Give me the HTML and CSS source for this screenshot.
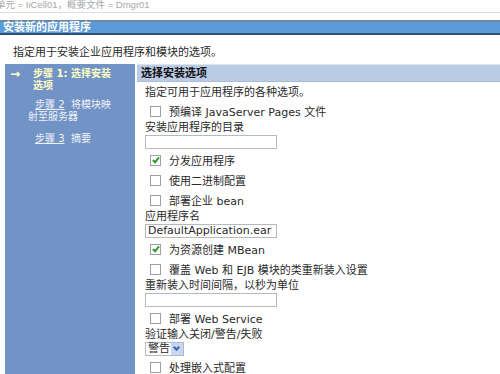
FILE: index.html
```html
<!DOCTYPE html>
<html lang="zh-CN">
<head>
<meta charset="UTF-8">
<title>安装新的应用程序</title>
<link rel="stylesheet" href="styles.css">
</head>
<body>

<div class="crumb">单元 = IiCell01，概要文件 = Dmgr01</div>

<div class="title">安装新的应用程序</div>

<div class="desc">指定用于安装企业应用程序和模块的选项。</div>

<div class="wizard">
  <div class="nav">
    <div class="step current">
      <span class="arrow">→</span>
      <span class="step-text">步骤 1: 选择安装选项</span>
    </div>
    <div class="step">
      <span class="step-text"><a href="#">步骤 2</a>&nbsp; 将模块映射至服务器</span>
    </div>
    <div class="step">
      <span class="step-text"><a href="#">步骤 3</a>&nbsp; 摘要</span>
    </div>
  </div>

  <div class="main">
    <div class="main-head">选择安装选项</div>
    <div class="main-body">
      <div class="intro">指定可用于应用程序的各种选项。</div>

      <div class="check"><span class="box"></span>预编译 JavaServer Pages 文件</div>
      <div class="label">安装应用程序的目录</div>
      <div class="input"></div>

      <div class="check"><span class="box on"></span>分发应用程序</div>
      <div class="check"><span class="box"></span>使用二进制配置</div>
      <div class="check"><span class="box"></span>部署企业 bean</div>
      <div class="label">应用程序名</div>
      <div class="input">DefaultApplication.ear</div>

      <div class="check"><span class="box on"></span>为资源创建 MBean</div>
      <div class="check"><span class="box"></span>覆盖 Web 和 EJB 模块的类重新装入设置</div>
      <div class="label">重新装入时间间隔，以秒为单位</div>
      <div class="input"></div>

      <div class="check"><span class="box"></span>部署 Web Service</div>
      <div class="label">验证输入关闭/警告/失败</div>
      <div class="select"><span class="select-val">警告</span><span class="select-btn"></span></div>

      <div class="check last"><span class="box"></span>处理嵌入式配置</div>
    </div>
  </div>
</div>

</body>
</html>
```

FILE: styles.css
```css
html, body {
  margin: 0;
  padding: 0;
  background: #fff;
  font-family: "DejaVu Sans", "Noto Sans CJK SC", sans-serif;
  font-size: 11px;
  color: #2a2a2a;
  overflow: hidden;
}
.crumb {
  height: 12px;
  line-height: 10px;
  font-family: "Liberation Sans", "Noto Sans CJK SC", sans-serif;
  font-size: 9.5px;
  color: #a8a8a8;
  text-indent: -4px;
  border-bottom: 1px solid #dcdcdc;
  white-space: nowrap;
}
.title {
  margin-top: 7px;
  height: 11px;
  line-height: 11px;
  padding-left: 3px;
  background: #5b9ad9;
  border-top: 2px solid #6f88a2;
  border-bottom: 2px solid #33506f;
  color: #fff;
  font-weight: bold;
}
.desc {
  padding: 11px 0 0 13px;
  height: 18px;
  line-height: 14px;
}
/* wizard: steps on the left, form on the right */
.wizard {
  display: flex;
  margin-left: 5px;
  height: 320px;
}
.nav {
  width: 130px;
  background: #7293c5;
  padding-top: 4px;
  box-sizing: border-box;
}
.step {
  display: flex;
  color: #eef2fa;
  font-size: 10px;
  line-height: 12px;
  margin-bottom: 10px;
}
.step .step-text {
  padding-left: 23px;
  text-indent: 7px;
  width: 90px;
}
.step.current {
  color: #ffffc4;
  font-weight: bold;
  margin-bottom: 7px;
}
.step.current .arrow {
  width: 23px;
  padding-left: 5px;
  font-size: 12px;
}
.step.current .step-text {
  padding-left: 0;
  text-indent: 0;
  width: 86px;
}
.step a {
  color: #eef2fa;
}
.main {
  flex: 1;
  margin-left: 2px;
  border-top: 1px solid #dde4ee;
}
.main-head {
  height: 16px;
  line-height: 17px;
  background: #bacbe5;
  border-bottom: 1px solid #a9bcd9;
  padding-left: 4px;
  font-weight: bold;
  color: #111;
}
.main-body {
  padding-left: 8px;
}
.intro {
  margin-top: 4px;
  line-height: 14px;
}
.check {
  display: flex;
  align-items: center;
  height: 18px;
  margin-top: 2px;
  padding-left: 5px;
}
.box {
  width: 9px;
  height: 9px;
  border: 1px solid #9a9fa6;
  background: #fff;
  margin-right: 8px;
  position: relative;
}
.box.on::after {
  content: "";
  position: absolute;
  left: 3px;
  top: 0px;
  width: 2px;
  height: 5px;
  border: solid #2f9a2f;
  border-width: 0 2px 2px 0;
  transform: rotate(40deg);
}
.label {
  margin-top: 1px;
  line-height: 14px;
}
.input {
  width: 128px;
  height: 12px;
  line-height: 12px;
  border: 1px solid #b4bac2;
  padding-left: 2px;
  font-size: 11px;
}
.select {
  display: flex;
  width: 37px;
  height: 12px;
  border: 1px solid #b4bac2;
  margin-bottom: 1px;
}
.select-val {
  flex: 1;
  line-height: 12px;
  padding-left: 2px;
}
.select-btn {
  width: 12px;
  background: #c8d8f2;
  position: relative;
}
.select-btn::after {
  content: "";
  position: absolute;
  left: 3px;
  top: 2px;
  width: 3px;
  height: 3px;
  border: solid #3d63a8;
  border-width: 0 2px 2px 0;
  transform: rotate(45deg);
}
```
